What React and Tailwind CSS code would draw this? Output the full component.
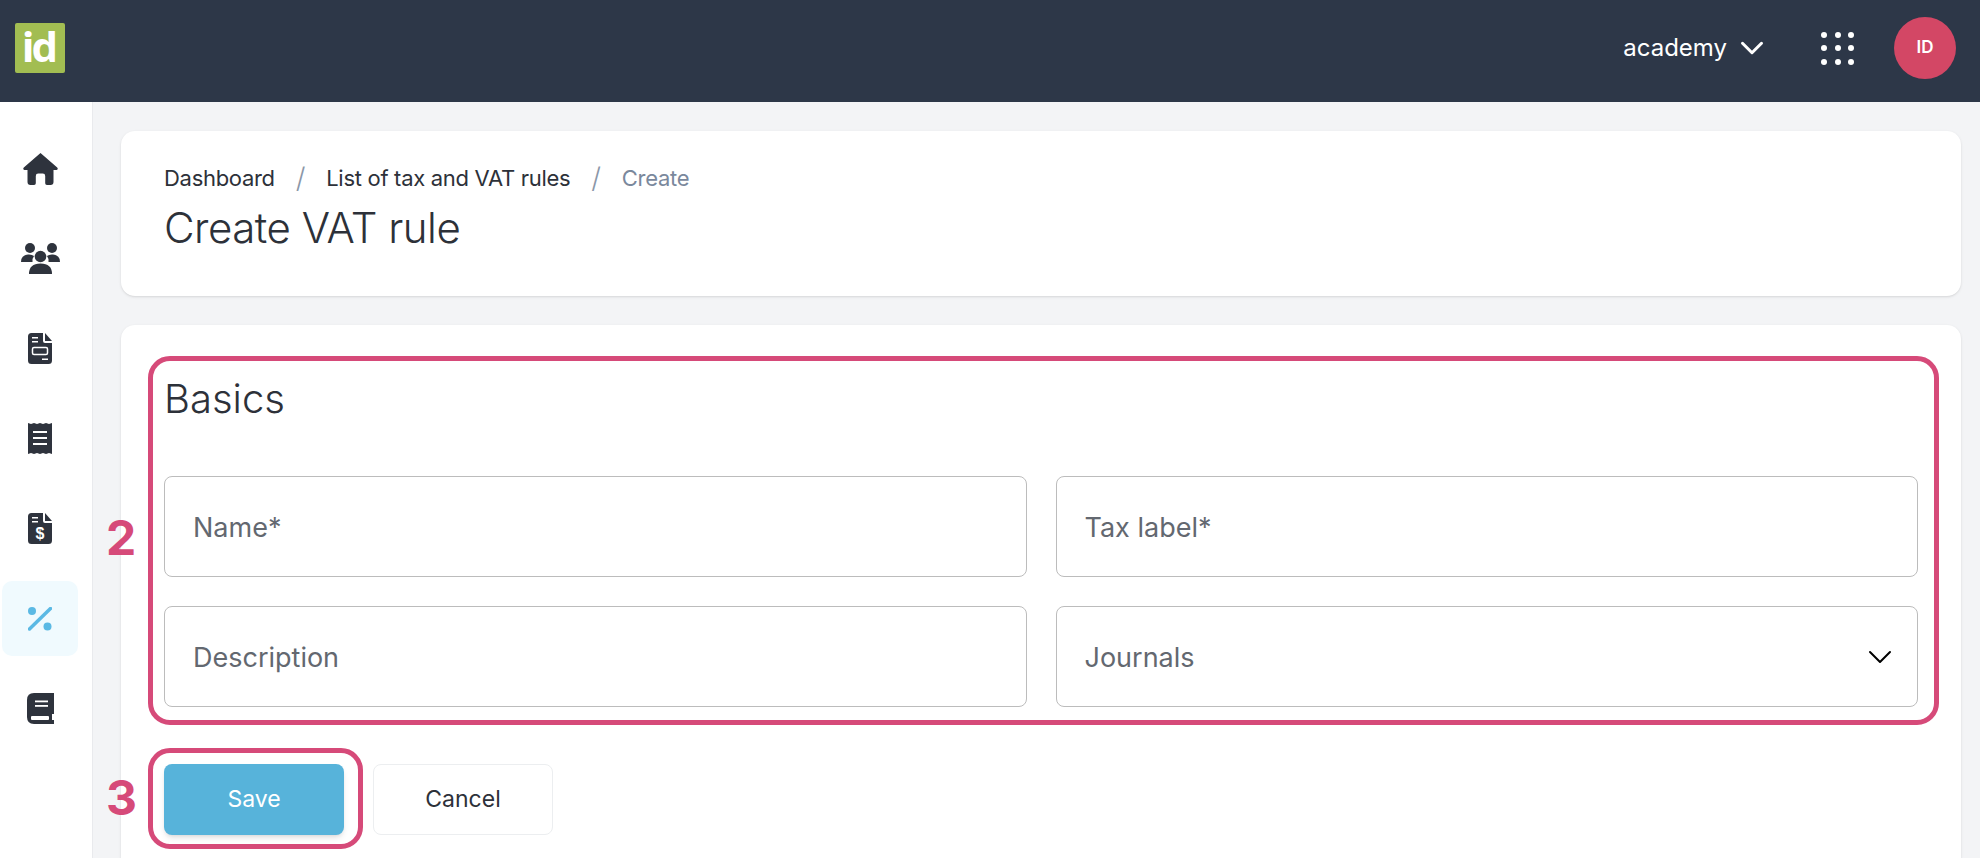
import { ChevronDown } from 'lucide-react';

const FONT = "font-['Inter','Noto_Sans',sans-serif]";

function HomeIcon() {
  return (
    <svg width="35" height="32" viewBox="0 0 35 32" className="fill-[#2e333d]">
      <path d="M17.5 0 L34.2 14.6 q1.4 1.7 -0.6 2.4 h-3.1 v12 q0 3 -3 3 h-3.6 q-1.7 0 -1.7 -1.7 v-7.3 q0 -2.4 -2.4 -2.4 h-4.6 q-2.4 0 -2.4 2.4 v7.3 q0 1.7 -1.7 1.7 h-3.6 q-3 0 -3 -3 v-12 h-3.1 q-2 -.7 -.6 -2.4 z" />
    </svg>
  );
}

function UsersIcon() {
  return (
    <svg width="39" height="31" viewBox="0 0 39 31" className="fill-[#2e333d]">
      <circle cx="9" cy="5" r="5" />
      <circle cx="31" cy="5" r="5" />
      <path d="M0 19 q0 -7 7 -7.5 q4 -.3 6 1.5 q-2 2.500 -1.500 6 z" />
      <path d="M39 19 q0 -7 -7 -7.500 q-4 -.3 -6 1.500 q2 2.500 1.500 6 z" />
      <circle cx="19.500" cy="13.500" r="5.800" />
      <path d="M8 31 q0 -10.500 11.500 -10.500 q11.500 0 11.500 10.500 z" />
    </svg>
  );
}

function DocBody() {
  return (
    <>
      <path d="M3.500 0 H15 V8 q0 2 2 2 H24 V27.500 q0 3.500 -3.500 3.500 H3.500 q-3.500 0 -3.500 -3.500 V3.500 q0 -3.500 3.500 -3.500 z" />
      <path d="M17 0 L24 8 H17 z" />
    </>
  );
}

function InvoiceIcon() {
  return (
    <svg width="24" height="31" viewBox="0 0 24 31" className="fill-[#2e333d]">
      <DocBody />
      <rect x="4" y="4" width="6" height="1.500" fill="#fff" />
      <rect x="4" y="8" width="6" height="1.500" fill="#fff" />
      <rect x="4.500" y="14.500" width="15" height="7" rx="1.500" fill="none" stroke="#fff" strokeWidth="1.500" />
      <rect x="14" y="25.500" width="6" height="1.500" fill="#fff" />
    </svg>
  );
}

function ReceiptIcon() {
  return (
    <svg width="24" height="31" viewBox="0 0 24 31" className="fill-[#2e333d]">
      <path d="M0 0 L3 1 L6 0 L9 1 L12 0 L15 1 L18 0 L21 1 L24 0 V31 L21 30 L18 31 L15 30 L12 31 L9 30 L6 31 L3 30 L0 31 z" />
      <rect x="5" y="8" width="14" height="2" fill="#fff" />
      <rect x="5" y="14" width="14" height="2" fill="#fff" />
      <rect x="5" y="20" width="14" height="2" fill="#fff" />
    </svg>
  );
}

function DollarDocIcon() {
  return (
    <svg width="24" height="31" viewBox="0 0 24 31" className="fill-[#2e333d]">
      <DocBody />
      <rect x="4" y="4" width="6" height="1.500" fill="#fff" />
      <rect x="4" y="8" width="6" height="1.500" fill="#fff" />
      <text x="12" y="26" textAnchor="middle" fontSize="16" fontWeight="700" fill="#fff" fontFamily="Liberation Sans">$</text>
    </svg>
  );
}

function PercentIcon() {
  return (
    <svg width="24" height="24" viewBox="0 0 24 24" className="fill-[#5bb9e4]">
      <circle cx="4" cy="4" r="4" />
      <circle cx="19.500" cy="19.500" r="4" />
      <path d="M22.500 1.500 L1.500 22" stroke="#5bb9e4" strokeWidth="3.500" strokeLinecap="round" />
    </svg>
  );
}

function BookIcon() {
  return (
    <svg width="27" height="31" viewBox="0 0 27 31" className="fill-[#2e333d]">
      <path d="M7 0 H27 V31 H7 q-7 0 -7 -7 V7 q0 -7 7 -7 z" />
      <rect x="8" y="7.500" width="13" height="1.800" fill="#fff" />
      <rect x="8" y="12" width="13" height="1.800" fill="#fff" />
      <rect x="4" y="23" width="18" height="4" rx="1" fill="#fff" />
      <rect x="25" y="21" width="2" height="6" fill="#fff" />
    </svg>
  );
}

const NAV = [
  { id: 'home', icon: <HomeIcon /> },
  { id: 'contacts', icon: <UsersIcon /> },
  { id: 'invoices', icon: <InvoiceIcon /> },
  { id: 'receipts', icon: <ReceiptIcon /> },
  { id: 'payments', icon: <DollarDocIcon /> },
  { id: 'vat', icon: <PercentIcon />, active: true },
  { id: 'ledger', icon: <BookIcon /> },
];

function Field({ label, select }) {
  return (
    <div className="h-[101px] flex items-center justify-between rounded-lg border border-[#bcbcbc] bg-white pl-[28px] pr-[17px] text-[27px] text-[#636870]">
      <span className="pt-[3px]">{label}</span>
      {select && <ChevronDown className="w-[40px] h-[40px] text-black" strokeWidth={1.2} />}
    </div>
  );
}

export default function App() {
  return (
    <div className={`${FONT} h-[858px] overflow-hidden flex flex-col bg-[#f3f4f6] text-[#2d3139]`}>
      <header className="h-[102px] shrink-0 bg-[#2d3748] flex items-center justify-between pl-[15px] pr-[24px] pb-[6px]">
        <div className="w-[50px] h-[50px] rounded-[2px] bg-[#a2bd52] flex items-center justify-center text-white text-[42px] font-['Open_Sans'] font-bold tracking-[-3px] leading-none pb-[5px] pr-[3px]">
          id
        </div>
        <div className="flex items-center text-white">
          <span className="text-[24px] leading-none">academy</span>
          <ChevronDown className="w-[38px] h-[38px] ml-[6px]" strokeWidth={1.9} />
          <div className="ml-[50px] grid grid-cols-3 gap-x-[7.500px] gap-y-[7.500px]">
            {Array.from({ length: 9 }).map((_, i) => (
              <span key={i} className="w-[6px] h-[6px] rounded-full bg-white" />
            ))}
          </div>
          <div className="ml-[40px] w-[62px] h-[62px] rounded-full bg-[#d34765] flex items-center justify-center text-[17px] font-semibold">
            ID
          </div>
        </div>
      </header>

      <div className="flex flex-1 min-h-0">
        <aside className="w-[93px] shrink-0 bg-white border-r border-[#e9eaed] pt-[29px] px-[2px] flex flex-col">
          {NAV.map((item) => (
            <div
              key={item.id}
              className={`w-[76px] h-[75px] mb-[15px] rounded-[10px] flex items-center justify-center ${item.active ? 'bg-[#f0fafe]' : ''}`}
            >
              {item.icon}
            </div>
          ))}
        </aside>

        <main className="flex-1 min-w-0 pt-[29px] pl-[28px] pr-[19px] flex flex-col gap-[29px]">
          <section className="h-[165px] shrink-0 bg-white rounded-[14px] shadow-sm px-[43px] pt-[29px]">
            <nav className="flex items-center text-[22px] leading-[36px] h-[36px] tracking-[-0.3px]">
              <span>Dashboard</span>
              <span className="mx-[21px] text-[#8b97a8] text-[28px] font-light">/</span>
              <span>List of tax and VAT rules</span>
              <span className="mx-[21px] text-[#8b97a8] text-[28px] font-light">/</span>
              <span className="text-[#7a889c]">Create</span>
            </nav>
            <h1 className="text-[42px] leading-[56px] font-[350] tracking-[-0.5px] mt-[4px]">Create VAT rule</h1>
          </section>

          <section className="relative flex-1 bg-white rounded-t-[14px] shadow-sm px-[43px] pt-[46px]">
            <h2 className="text-[40px] leading-[56px] font-[350]">Basics</h2>
            <div className="mt-[49px] grid grid-cols-2 gap-x-[29px] gap-y-[29px]">
              <Field label="Name*" />
              <Field label="Tax label*" />
              <Field label="Description" />
              <Field label="Journals" select />
            </div>
            <div className="mt-[57px] flex gap-[29px]">
              <button className="w-[180px] h-[71px] rounded-lg bg-[#57b3da] text-white text-[23px] shadow-md">Save</button>
              <button className="w-[180px] h-[71px] rounded-lg bg-white border border-[#eceef0] text-[23px]">Cancel</button>
            </div>

            {/* pink annotation frames and step numbers drawn over the form */}
            <div className="absolute left-[27px] top-[31px] right-[22px] h-[369px] rounded-[22px] border-[5px] border-[#d64a79]" />
            <div className="absolute left-[27px] top-[423px] w-[215px] h-[101px] rounded-[22px] border-[5px] border-[#d64a79]" />
            <span className="absolute left-[-15px] top-[183px] text-[48px] leading-[60px] font-bold text-[#d64a79]">2</span>
            <span className="absolute left-[-15px] top-[443px] text-[48px] leading-[60px] font-bold text-[#d64a79]">3</span>
          </section>
        </main>
      </div>
    </div>
  );
}
